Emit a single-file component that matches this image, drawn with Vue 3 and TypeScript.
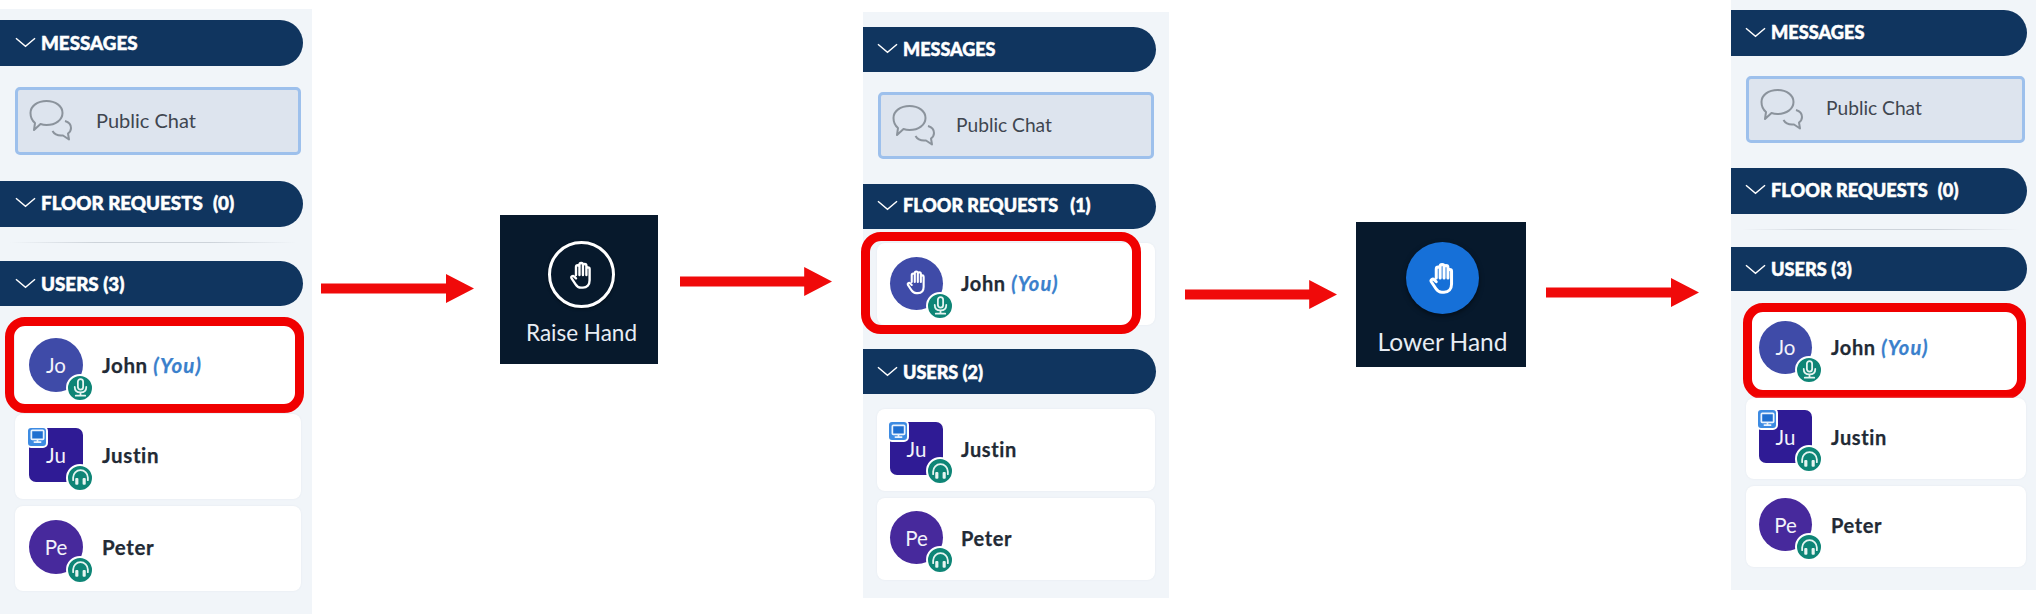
<script setup lang="ts">
interface User { id: string; initials: string; name: string; you?: boolean; shape: 'round' | 'square'; color: string; audio: 'mic' | 'headset'; presenter?: boolean; raised?: boolean; ring?: boolean }
interface Group { key: string; title: string; count?: string; users: User[] }
interface Panel { cls: string; groups: Group[] }

const john = (raised: boolean, ring: boolean): User => ({ id: 'john', initials: 'Jo', name: 'John', you: true, shape: 'round', color: '#3f4ba8', audio: 'mic', raised, ring })
const justin: User = { id: 'justin', initials: 'Ju', name: 'Justin', shape: 'square', color: '#2f1b95', audio: 'headset', presenter: true }
const peter: User = { id: 'peter', initials: 'Pe', name: 'Peter', shape: 'round', color: '#47299c', audio: 'headset' }

const panels: Panel[] = [
  { cls: 'p1', groups: [
    { key: 'floor', title: 'FLOOR REQUESTS', count: '(0)', users: [] },
    { key: 'users', title: 'USERS (3)', users: [john(false, true), justin, peter] },
  ] },
  { cls: 'p2', groups: [
    { key: 'floor', title: 'FLOOR REQUESTS', count: '(1)', users: [john(true, true)] },
    { key: 'users', title: 'USERS (2)', users: [justin, peter] },
  ] },
  { cls: 'p3', groups: [
    { key: 'floor', title: 'FLOOR REQUESTS', count: '(0)', users: [] },
    { key: 'users', title: 'USERS (3)', users: [john(false, true), justin, peter] },
  ] },
]
const handPath = 'M7.5 12V6a1.3 1.3 0 0 1 2.6 0V4.3a1.3 1.3 0 0 1 2.6 0V5a1.3 1.3 0 0 1 2.6 0v2.5a1.2 1.2 0 0 1 2.4 0V16c0 3.5-2 5.5-5 5.5h-1.5c-2 0-3-1-4-2.5l-3-4.5c-.7-1.2.9-2.4 2-1.2l1.3 1.2M10.1 6v6M12.7 5v7M15.3 6v6'
</script>

<template>
  <main class="board">
    <template v-for="(panel, pi) in panels" :key="panel.cls">
      <section class="panel" :class="panel.cls">
        <div class="head messages-head">
          <svg class="chev" viewBox="0 0 22 11"><path d="M1 1l10 8.5L21 1" /></svg>
          <span>MESSAGES</span>
        </div>
        <div class="chat">
          <svg class="chat-icon" viewBox="0 0 44 44" fill="none">
            <path d="M6 24C3 21.5 1.500 18 1.500 14 1.500 7 8.500 2 17.500 2S33.500 7 33.500 14 26.500 26 17.500 26c-2 0-4-.3-6-1L5 31z" />
            <path d="M36 22c3.500 1 6 3.500 6 7 0 2.500-1 4-3 5.500l1 6-6-4c-4.500.5-8.500-1-10.500-4.500" />
          </svg>
          <span class="chat-label">Public Chat</span>
        </div>
        <template v-for="group in panel.groups" :key="group.key">
          <div class="head" :class="group.key + '-head'">
            <svg class="chev" viewBox="0 0 22 11"><path d="M1 1l10 8.500L21 1" /></svg>
            <span>{{ group.title }}</span>
            <span v-if="group.count" class="count">{{ group.count }}</span>
          </div>
          <div v-if="group.users.length" class="list" :class="group.key + '-list'">
            <article v-for="user in group.users" :key="user.id" class="card" :class="{ ringed: user.ring }">
              <div class="avatar" :class="user.shape" :style="{ background: user.color }">
                <svg v-if="user.raised" class="avatar-hand" viewBox="0 0 24 24" fill="none"><path :d="handPath" /></svg>
                <span v-else>{{ user.initials }}</span>
                <span v-if="user.presenter" class="screen">
                  <svg viewBox="0 0 18 18" fill="none">
                    <rect class="mon" x="2.500" y="2.500" width="13" height="9.500" rx="1" />
                    <path d="M9 12v2.500M5 15h8" />
                  </svg>
                </span>
                <span class="audio">
                  <svg v-if="user.audio === 'mic'" viewBox="0 0 20 20" fill="none">
                    <rect x="7.500" y="2" width="5" height="10" rx="2.500" />
                    <path d="M4.500 9.500c0 3.400 2.300 5.200 5.500 5.200s5.500-1.800 5.500-5.200M10 14.700v2.300M5.500 17.800h9" />
                  </svg>
                  <svg v-else viewBox="0 0 20 20" fill="none">
                    <path d="M3 12.500V10a7 7 0 0 1 14 0v2.500" />
                    <rect class="cup" x="5" y="10.500" width="3" height="6.500" rx="1" />
                    <rect class="cup" x="12" y="10.500" width="3" height="6.500" rx="1" />
                  </svg>
                </span>
              </div>
              <div class="name">{{ user.name }}<em v-if="user.you"> (You)</em></div>
              <div v-if="user.ring" class="ring"></div>
            </article>
          </div>
          <div v-else class="divider"></div>
        </template>
      </section>

      <template v-if="pi < 2">
        <svg class="arrow" :class="'a' + (pi * 2 + 1)" viewBox="0 0 153 29"><path d="M0 9.500h125V0l28 14.500-28 14.500v-9.500H0z" /></svg>
        <div class="tile" :class="pi === 0 ? 'raise' : 'lower'">
          <div class="tile-btn">
            <svg viewBox="0 0 24 24" fill="none"><path :d="handPath" /></svg>
          </div>
          <div class="tile-label">{{ pi === 0 ? 'Raise Hand' : 'Lower Hand' }}</div>
        </div>
        <svg class="arrow" :class="'a' + (pi * 2 + 2)" viewBox="0 0 153 29"><path d="M0 9.500h125V0l28 14.500-28 14.500v-9.500H0z" /></svg>
      </template>
    </template>
  </main>
</template>

<style>
html, body { margin: 0; background: #fff; }
</style>

<style scoped>
.board {
  display: flex;
  align-items: flex-start;
  width: 2036px;
  height: 614px;
  overflow: hidden;
  background: #fff;
  font-family: "Lato", "Noto Sans", sans-serif;
}
.panel {
  flex: none;
  box-sizing: border-box;
  background: #f1f5f9;
  width: var(--w);
  height: var(--h);
  margin-top: var(--top);
  margin-left: var(--ml);
}
.p1 {
  --w: 312px; --h: 605px; --top: 9px; --ml: 0px;
  --head-w: 303px; --head-h: 46px; --head-fs: 18.800px; --head-pl: 15px; --count-ml: 10px; --m-top: 11px;
  --chat-mt: 21px; --chat-w: 286px; --chat-h: 68px; --chat-ml: 15px; --chat-fs: 20px; --chat-gap: 23px; --chat-pb: 2px;
  --floor-mt: 26px; --div-mt: 15px; --users-mt: 18px; --users-h: 45px;
  --list-mt: 16px; --card-h: 85px; --card-w: 286px; --card-ml: 15px; --av: 54px; --av-ml: 14px; --name-ml: 19px; --name-fs: 20.500px;
  --shift: 4px; --ring-shift: 0px;
  --r-l: -10px; --r-r: -3px; --r-t: -5px; --r-b: -6px;
}
.p2 {
  --w: 306px; --h: 586px; --top: 12px; --ml: 31px;
  --head-w: 293px; --head-h: 45px; --head-fs: 18px; --head-pl: 14px; --count-ml: 12px; --m-top: 15px;
  --chat-mt: 20px; --chat-w: 276px; --chat-h: 67px; --chat-ml: 15px; --chat-fs: 19.200px; --chat-gap: 20px; --chat-pb: 2px;
  --floor-mt: 25px; --floor-list-mt: 14px; --users-mt: 24px; --users-h: 45px;
  --list-mt: 15px; --card-h: 82px; --card-w: 278px; --card-ml: 14px; --av: 53px; --av-ml: 13px; --name-ml: 18px; --name-fs: 20px;
  --shift: 3px; --ring-shift: 2px;
  --r-l: -16px; --r-r: 14px; --r-t: -11px; --r-b: -9px;
}
.p3 {
  --w: 305px; --h: 590px; --top: 0px; --ml: 32px;
  --head-w: 296px; --head-h: 46px; --head-fs: 18.200px; --head-pl: 14px; --count-ml: 10px; --m-top: 10px;
  --chat-mt: 20px; --chat-w: 279px; --chat-h: 67px; --chat-ml: 15px; --chat-fs: 19.200px; --chat-gap: 22px; --chat-pb: 4px;
  --floor-mt: 25px; --div-mt: 15px; --users-mt: 17px; --users-h: 44px;
  --list-mt: 19px; --card-h: 81px; --card-w: 280px; --card-ml: 15px; --av: 53px; --av-ml: 13px; --name-ml: 19px; --name-fs: 20px;
  --shift: 4px; --ring-shift: 7px;
  --r-l: -3px; --r-r: 0px; --r-t: -7px; --r-b: -8px;
}
.head {
  display: flex;
  align-items: center;
  box-sizing: border-box;
  width: var(--head-w);
  height: var(--head-h);
  padding-left: var(--head-pl);
  background: #10355f;
  border-radius: 0 23px 23px 0;
  color: #fff;
  font-weight: 900;
  font-size: var(--head-fs);
  -webkit-text-stroke: 0.5px #fff;
  white-space: nowrap;
}
.messages-head { margin-top: var(--m-top); padding-bottom: 2px; }
.floor-head { margin-top: var(--floor-mt); padding-bottom: 3px; }
.users-head { margin-top: var(--users-mt); height: var(--users-h); }
.chev { width: 21px; height: 11px; margin-right: 5px; flex: none; }
.chev path { fill: none; stroke: #fff; stroke-width: 1.500; }
.count { margin-left: var(--count-ml); }
.chat {
  display: flex;
  align-items: center;
  box-sizing: border-box;
  width: var(--chat-w);
  height: var(--chat-h);
  margin-top: var(--chat-mt);
  margin-left: var(--chat-ml);
  padding-left: 11px;
  background: #dde4ee;
  border: 3px solid #9dc0ec;
  border-radius: 5px;
}
.chat-icon { width: 44px; height: 44px; flex: none; }
.chat-icon path { stroke: #8b939c; stroke-width: 2; stroke-linejoin: round; }
.chat-label { margin-left: var(--chat-gap); margin-bottom: var(--chat-pb); font-size: var(--chat-fs); color: #3f4650; }
.divider {
  height: 1px;
  margin: var(--div-mt) 16px 0 10px;
  background: linear-gradient(90deg, transparent, #cdd3da 30%, #cdd3da 70%, transparent);
}
.floor-list { margin-top: var(--floor-list-mt); }
.users-list { margin-top: var(--list-mt); }
.list {
  display: flex;
  flex-direction: column;
  gap: 7px;
  width: var(--card-w);
  margin-left: var(--card-ml);
}
.card {
  position: relative;
  display: flex;
  align-items: center;
  box-sizing: border-box;
  height: var(--card-h);
  padding-left: var(--av-ml);
  padding-bottom: var(--shift);
  background: #fff;
  border-radius: 8px;
  box-shadow: 0 0 2px #e3e8ee;
}
.ringed { padding-bottom: var(--ring-shift); }
.avatar {
  position: relative;
  flex: none;
  display: flex;
  align-items: center;
  justify-content: center;
  width: var(--av);
  height: var(--av);
  color: #f2f2fa;
  font-size: 20.500px;
}
.round { border-radius: 50%; }
.square { border-radius: 7px; }
.avatar-hand { width: 28px; height: 28px; margin-top: -2px; }
.avatar-hand path { stroke: #fff; stroke-width: 1.800; stroke-linecap: round; stroke-linejoin: round; }
.audio {
  position: absolute;
  right: -11px;
  bottom: -10px;
  display: flex;
  align-items: center;
  justify-content: center;
  width: 24px;
  height: 24px;
  border: 2px solid #fff;
  border-radius: 50%;
  background: #0e8576;
}
.audio svg { width: 21px; height: 21px; }
.audio path, .audio rect { stroke: #e6f4f1; stroke-width: 1.700; stroke-linecap: round; }
.audio .cup { fill: #e6f4f1; stroke: none; }
.screen {
  position: absolute;
  left: -3px;
  top: -2px;
  display: flex;
  align-items: center;
  justify-content: center;
  width: 18px;
  height: 18px;
  border: 2px solid #fff;
  border-radius: 5px;
  background: #3d8be2;
}
.screen svg { width: 17px; height: 17px; }
.screen rect, .screen path { stroke: #eaf3fd; stroke-width: 1.800; }
.screen .mon { fill: #1f6fd0; }
.name {
  margin-left: var(--name-ml);
  font-size: var(--name-fs);
  font-weight: 700;
  letter-spacing: 0.6px;
  -webkit-text-stroke: 0.25px currentColor;
  color: #222a35;
  white-space: nowrap;
}
.name em { color: #3a80cc; font-style: italic; letter-spacing: 1.100px; }
.ring {
  position: absolute;
  left: var(--r-l);
  right: var(--r-r);
  top: var(--r-t);
  bottom: var(--r-b);
  border: 9px solid #f00000;
  border-radius: 20px;
}
.arrow { flex: none; height: 29px; }
.arrow path { fill: #f00a0a; }
.a1 { width: 153px; margin: 274px 0 0 9px; }
.a2 { width: 152px; margin: 267px 0 0 22px; }
.a3 { width: 152px; margin: 280px 0 0 16px; }
.a4 { width: 153px; margin: 278px 0 0 20px; }
.tile {
  flex: none;
  display: flex;
  flex-direction: column;
  align-items: center;
  box-sizing: border-box;
  background: #07192c;
  color: #e8edf4;
}
.raise { width: 158px; height: 149px; margin: 215px 0 0 26px; padding: 26px 0 0 5px; }
.lower { width: 170px; height: 145px; margin: 222px 0 0 19px; padding: 20px 0 0 3px; }
.tile-btn {
  display: flex;
  align-items: center;
  justify-content: center;
  box-sizing: border-box;
  border-radius: 50%;
}
.raise .tile-btn { width: 67px; height: 67px; border: 3.500px solid #fff; box-shadow: 0 1px 3px #00000080; }
.lower .tile-btn { width: 73px; height: 72px; background: #1670d8; box-shadow: 0 2px 5px #00000080; }
.tile-btn svg { width: 32px; height: 32px; }
.lower .tile-btn svg { width: 36px; height: 36px; }
.tile-btn path { stroke: #fff; stroke-width: 1.800; stroke-linecap: round; stroke-linejoin: round; }
.lower .tile-btn path { stroke-width: 2; }
.tile-label { white-space: nowrap; }
.raise .tile-label { margin-top: 11px; font-size: 22.500px; }
.lower .tile-label { margin-top: 13px; font-size: 24.500px; }
</style>
